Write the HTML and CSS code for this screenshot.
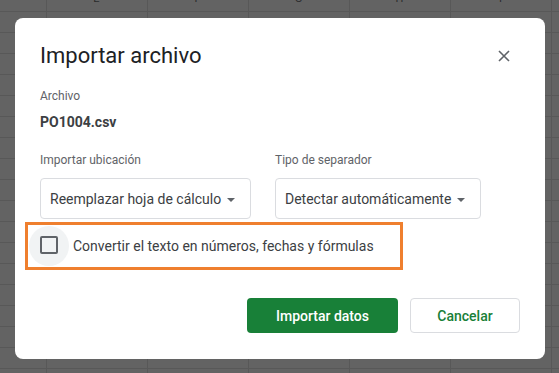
FILE: index.html
```html
<!DOCTYPE html>
<html lang="es">
<head>
    <meta charset="UTF-8">
    <meta name="viewport" content="width=device-width, initial-scale=1.0">
    <title>Importar archivo</title>
    <link rel="stylesheet" href="styles.css">
</head>
<body>
    <div class="sheet-head">
        <span>E</span>
        <span>F</span>
        <span>G</span>
        <span>H</span>
        <span>I</span>
    </div>

    <div class="dialog">
        <div class="dialog-header">
            <h2 class="dialog-title">Importar archivo</h2>
            <button class="close-btn" aria-label="Cerrar">
                <svg width="12" height="12" viewBox="0 0 12 12">
                    <path d="M1 1L11 11M11 1L1 11" stroke="#5f6368" stroke-width="1.6" fill="none"/>
                </svg>
            </button>
        </div>

        <div class="field-label">Archivo</div>
        <div class="file-name">PO1004.csv</div>

        <div class="options">
            <div class="option">
                <div class="field-label">Importar ubicación</div>
                <div class="select select-location">
                    <span>Reemplazar hoja de cálculo</span>
                    <span class="caret"></span>
                </div>
            </div>
            <div class="option">
                <div class="field-label">Tipo de separador</div>
                <div class="select select-separator">
                    <span>Detectar automáticamente</span>
                    <span class="caret"></span>
                </div>
            </div>
        </div>

        <label class="convert-row">
            <span class="check-wrap"><span class="checkbox"></span></span>
            <span class="convert-text">Convertir el texto en números, fechas y fórmulas</span>
        </label>

        <div class="actions">
            <button class="btn btn-primary">Importar datos</button>
            <button class="btn btn-secondary">Cancelar</button>
        </div>
    </div>
</body>
</html>
```

FILE: styles.css
```css
html {
    background-color: #636363;
    background-image:
        linear-gradient(to right, #585858 1px, transparent 1px),
        linear-gradient(to bottom, #585858 1px, transparent 1px);
    background-size: 101px 100%, 100% 21px;
    background-position: 46px 0, 0 11px;
    height: 100%;
}

body {
    margin: 0;
    font-family: Roboto, "Liberation Sans", sans-serif;
    overflow: hidden;
}

.sheet-head {
    display: flex;
    height: 11px;
    padding-left: 46px;
    overflow: hidden;
}

.sheet-head span {
    width: 101px;
    text-align: center;
    font-size: 11px;
    line-height: 11px;
    margin-top: -7px;
    color: #2a2b2c;
}

.dialog {
    box-sizing: border-box;
    width: 530px;
    height: 341px;
    margin: 7px 0 0 15px;
    padding: 24px 25px 26px 25px;
    background: #fff;
    border-radius: 8px;
    display: flex;
    flex-direction: column;
}

.dialog-header {
    display: flex;
    align-items: center;
    justify-content: space-between;
}

.dialog-title {
    margin: 0;
    font-size: 22px;
    line-height: 28px;
    font-weight: 400;
    color: #202124;
}

.close-btn {
    width: 24px;
    height: 24px;
    margin-right: 4px;
    padding: 0;
    border: none;
    background: none;
    display: flex;
    align-items: center;
    justify-content: center;
    cursor: pointer;
}

.field-label {
    font-size: 12px;
    line-height: 16px;
    color: #5f6368;
}

.dialog-header + .field-label {
    margin-top: 18px;
}

.file-name {
    margin-top: 8px;
    font-size: 14px;
    line-height: 20px;
    font-weight: 700;
    color: #3c4043;
}

.options {
    display: flex;
    gap: 24px;
    margin-top: 20px;
}

.select {
    box-sizing: border-box;
    height: 41px;
    margin-top: 10px;
    padding: 0 15px 0 9px;
    border: 1px solid #dadce0;
    border-radius: 4px;
    display: flex;
    align-items: center;
    justify-content: space-between;
    font-size: 14px;
    color: #3c4043;
}

.select-location {
    width: 211px;
}

.select-separator {
    width: 206px;
}

.caret {
    width: 0;
    height: 0;
    border-left: 4px solid transparent;
    border-right: 4px solid transparent;
    border-top: 4px solid #5f6368;
    margin-top: 2px;
}

.convert-row {
    box-sizing: border-box;
    width: 378px;
    height: 48px;
    margin: 3px 0 0 -15px;
    padding-left: 1px;
    border: 3px solid #ef7f2e;
    display: flex;
    align-items: center;
    gap: 4px;
    cursor: pointer;
}

.check-wrap {
    width: 40px;
    height: 40px;
    border-radius: 50%;
    background: #f1f3f4;
    display: flex;
    align-items: center;
    justify-content: center;
}

.checkbox {
    box-sizing: border-box;
    width: 18px;
    height: 18px;
    margin-top: -2px;
    border: 2px solid #5f6368;
    border-radius: 2px;
}

.convert-text {
    font-size: 14px;
    color: #3c4043;
}

.actions {
    display: flex;
    justify-content: flex-end;
    gap: 12px;
    margin-top: 28px;
}

.btn {
    box-sizing: border-box;
    height: 35px;
    border-radius: 4px;
    font-family: Roboto, "Liberation Sans", sans-serif;
    font-size: 14px;
    font-weight: 500;
    cursor: pointer;
}

.btn-primary {
    width: 151px;
    border: none;
    background: #188038;
    color: #fff;
}

.btn-secondary {
    width: 110px;
    border: 1px solid #dadce0;
    background: #fff;
    color: #188038;
}
```
